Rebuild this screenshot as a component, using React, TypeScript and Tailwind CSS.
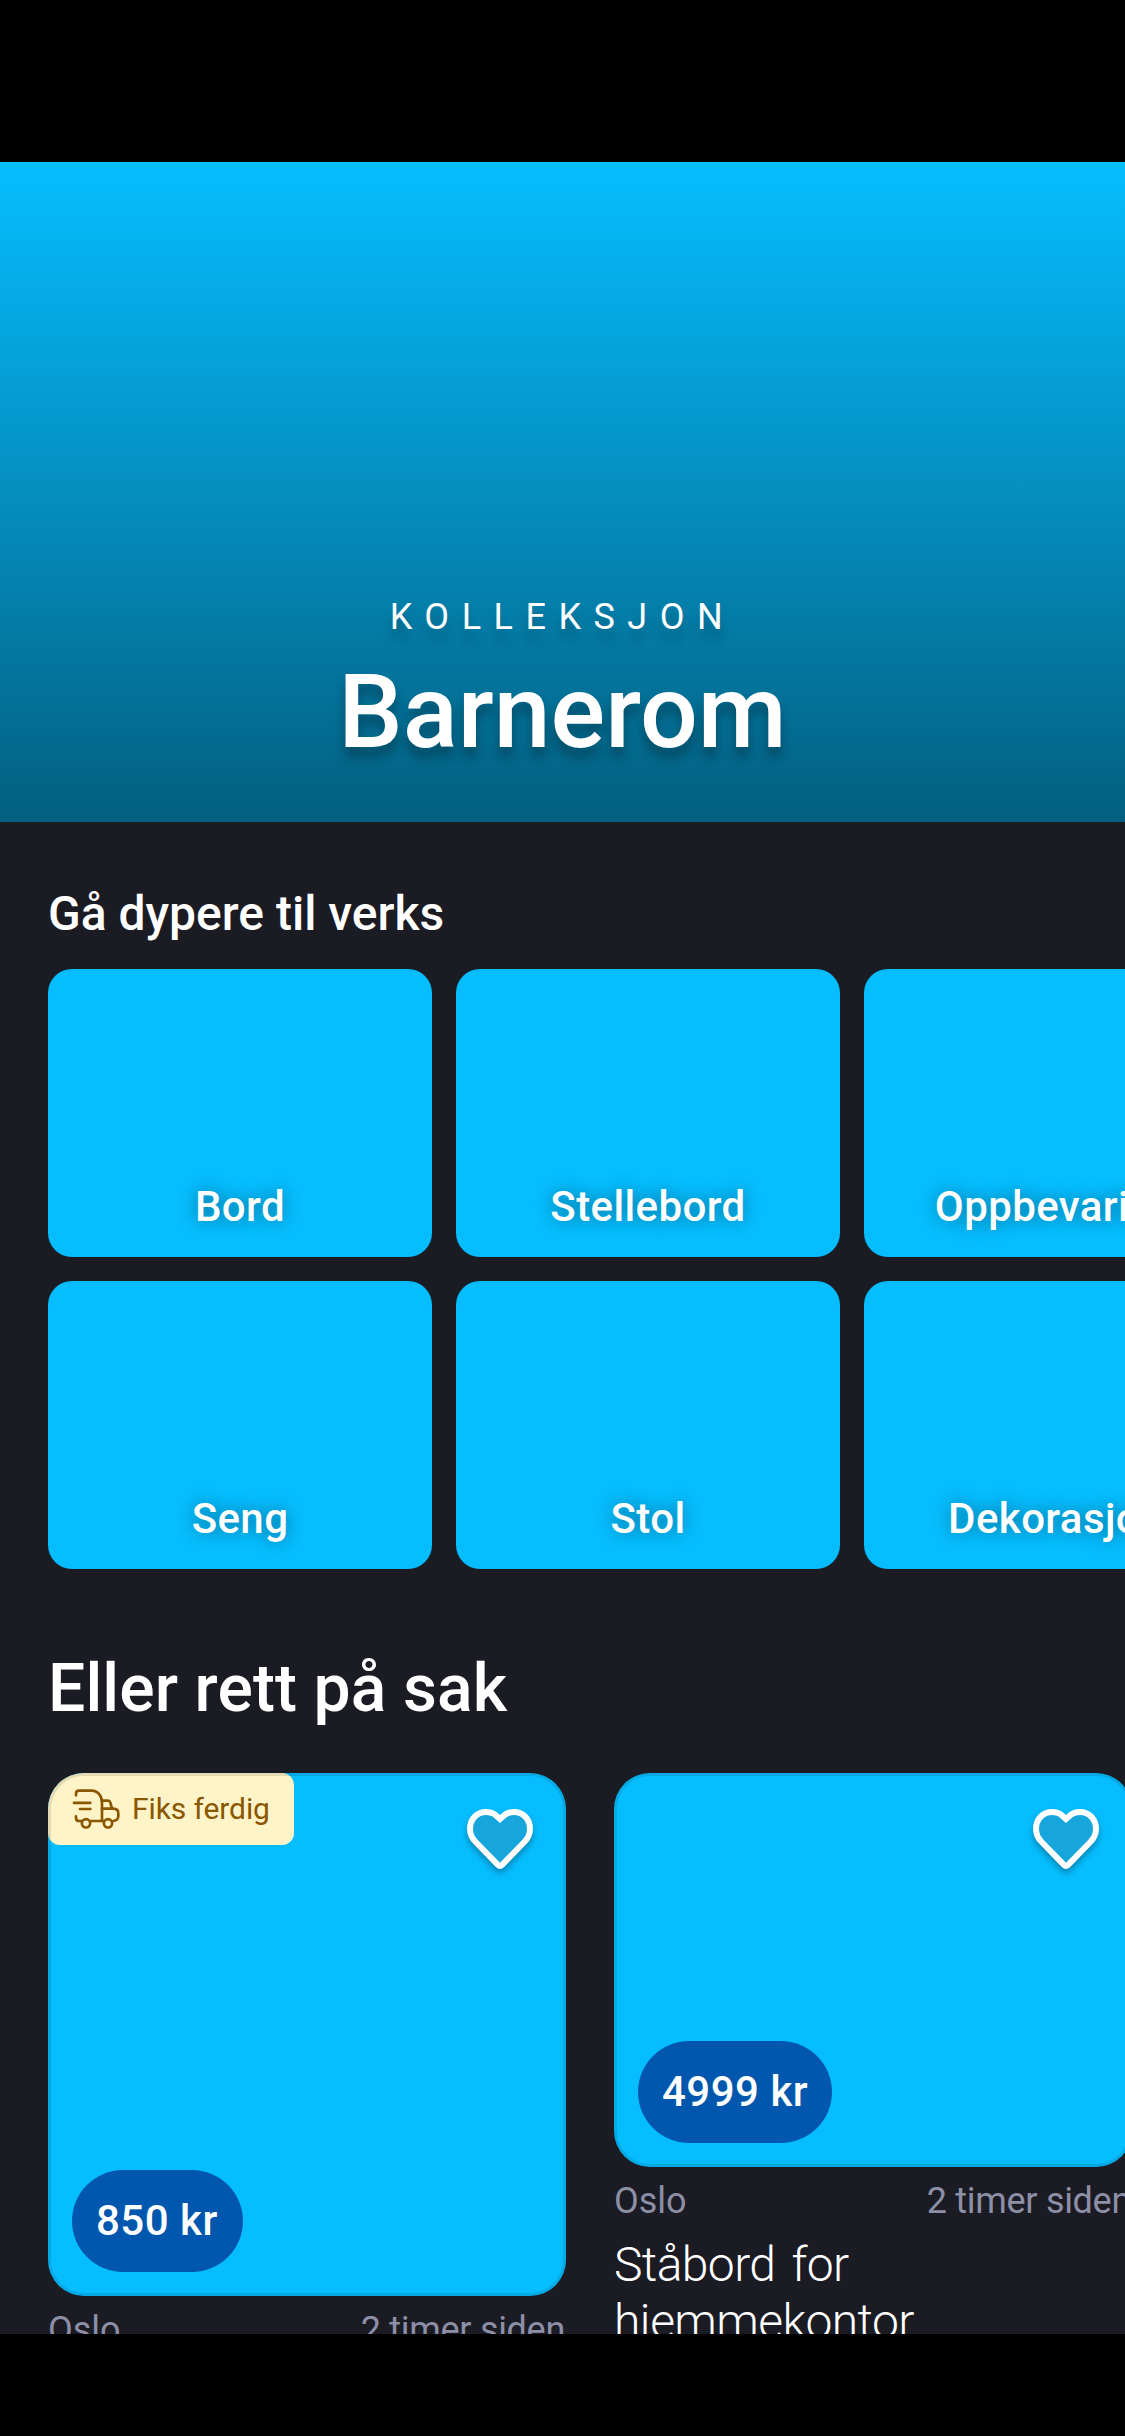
type Tile = { label: string };
type Ad = {
  price: string;
  place: string;
  age: string;
  title?: string;
  badge?: string;
  imageHeight: string;
  pillWidth: string;
};

const tiles: Tile[] = [
  { label: "Bord" },
  { label: "Stellebord" },
  { label: "Oppbevaring" },
  { label: "Seng" },
  { label: "Stol" },
  { label: "Dekorasjon" },
];

const ads: Ad[] = [
  {
    price: "850 kr",
    place: "Oslo",
    age: "2 timer siden",
    badge: "Fiks ferdig",
    imageHeight: "h-[523px]",
    pillWidth: "w-[171px]",
  },
  {
    price: "4999 kr",
    place: "Oslo",
    age: "2 timer siden",
    title: "Ståbord for hjemmekontor",
    imageHeight: "h-[394px]",
    pillWidth: "w-[194px]",
  },
];

function TruckIcon() {
  return (
    <svg
      className="size-12 shrink-0"
      viewBox="126 75 144 144"
      fill="none"
      stroke="currentColor"
      strokeWidth="8"
      strokeLinecap="round"
      strokeLinejoin="round"
    >
      <path d="M138 106v-5q0-9 9-9h37C204 92 216 107 216 128v55" />
      <path d="M132 128.500H181M150 147H181" />
      <path d="M138 169v4q0 10 9 10h8M181 183H221" />
      <path d="M216 122h18q5 0 7 6l5 18M216 146h34q15 0 15 15v7q0 13-15 15" />
      <circle cx="168" cy="190" r="12.500" />
      <circle cx="234" cy="190" r="12.500" />
    </svg>
  );
}

function HeartIcon() {
  return (
    <svg
      className="h-[66px] w-[72px] overflow-visible drop-shadow-[0_4px_3px_rgba(0,0,0,0.3)]"
      viewBox="72 138 216 198"
      fill="#17A6DC"
      stroke="white"
      strokeWidth="18"
    >
      <path d="M180 177L169 167C160 159 150 156 138 156C110 156 90 178 90 207C90 224 97 236 107 246L173 314Q180 321 187 314L253 246C263 236 270 224 270 207C270 178 250 156 222 156C210 156 200 159 191 167Z" />
    </svg>
  );
}

function Hero() {
  return (
    <header className="flex h-[660px] flex-col items-center justify-end bg-linear-to-b/srgb from-[#06BEFF] to-[#035F80] pb-[50px] text-white">
      <p className="mb-[11px] text-[36px] leading-[48px] font-[370] tracking-[12.5px] [text-shadow:0_12px_12px_rgba(0,0,0,0.22)]">
        KOLLEKSJON
      </p>
      <h1 className="text-[102px] leading-[120px] font-medium [text-shadow:0_10px_12px_rgba(0,0,0,0.3)]">
        Barnerom
      </h1>
    </header>
  );
}

function TileGrid() {
  return (
    <div className="mt-[25px] grid grid-cols-[repeat(3,384px)] gap-6">
      {tiles.map((tile) => (
        <div
          key={tile.label}
          className="flex h-72 items-end justify-center rounded-3xl bg-[#06BEFF] pb-[26px]"
        >
          <span className="text-[42px] leading-[48px] font-[470] tracking-[0.4px] [text-shadow:0_0_18px_rgba(0,0,0,0.45)]">
            {tile.label}
          </span>
        </div>
      ))}
    </div>
  );
}

function AdCard({ ad }: { ad: Ad }) {
  return (
    <article className="w-[518px] shrink-0">
      <div className={`relative overflow-hidden rounded-[36px] bg-[#06BEFF] ${ad.imageHeight}`}>
        {ad.badge && (
          <div className="absolute top-0 left-0 flex h-[72px] w-[246px] items-center gap-3 rounded-xl bg-[#FFF4C8] pl-6 text-[30px] leading-10 tracking-[-0.1px] text-[#8A5600]">
            <TruckIcon />
            <span>{ad.badge}</span>
          </div>
        )}
        <div className="absolute top-[33px] right-[30px]">
          <HeartIcon />
        </div>
        <div
          className={`absolute bottom-6 left-6 h-[102px] rounded-full bg-[#0057AD] pl-6 text-[42px] leading-[102px] font-[460] tracking-[0.5px] whitespace-nowrap ${ad.pillWidth}`}
        >
          {ad.price}
        </div>
        <div className="absolute inset-0 rounded-[36px] border-3 border-black/10" />
      </div>
      <div className="mt-[10px] flex justify-between text-[36px] leading-[48px] font-[370] text-[#8C8FA6]">
        <span>{ad.place}</span>
        <span className="mr-px tracking-[-0.3px]">{ad.age}</span>
      </div>
      {ad.title && (
        <h3 className="mt-[11px] w-[400px] text-[48px] leading-[57px] font-[320] tracking-[-0.6px] [word-spacing:5px]">
          {ad.title}
        </h3>
      )}
    </article>
  );
}

export default function App() {
  return (
    <div className="h-[2436px] w-[1125px] overflow-hidden bg-black pt-[162px] font-['Roboto',sans-serif]">
      <div className="h-[2172px] overflow-hidden bg-[#1B1B24] text-white">
        <Hero />
        <main className="pt-[62px] pl-12">
          <h2 className="text-[48px] leading-[60px] font-[470]">Gå dypere til verks</h2>
          <TileGrid />
          <h2 className="mt-[80px] text-[66px] leading-[80px] font-[470] tracking-[0.1px]">
            Eller rett på sak
          </h2>
          <div className="mt-[44px] flex items-start gap-12">
            {ads.map((ad) => (
              <AdCard key={ad.price} ad={ad} />
            ))}
          </div>
        </main>
      </div>
    </div>
  );
}
